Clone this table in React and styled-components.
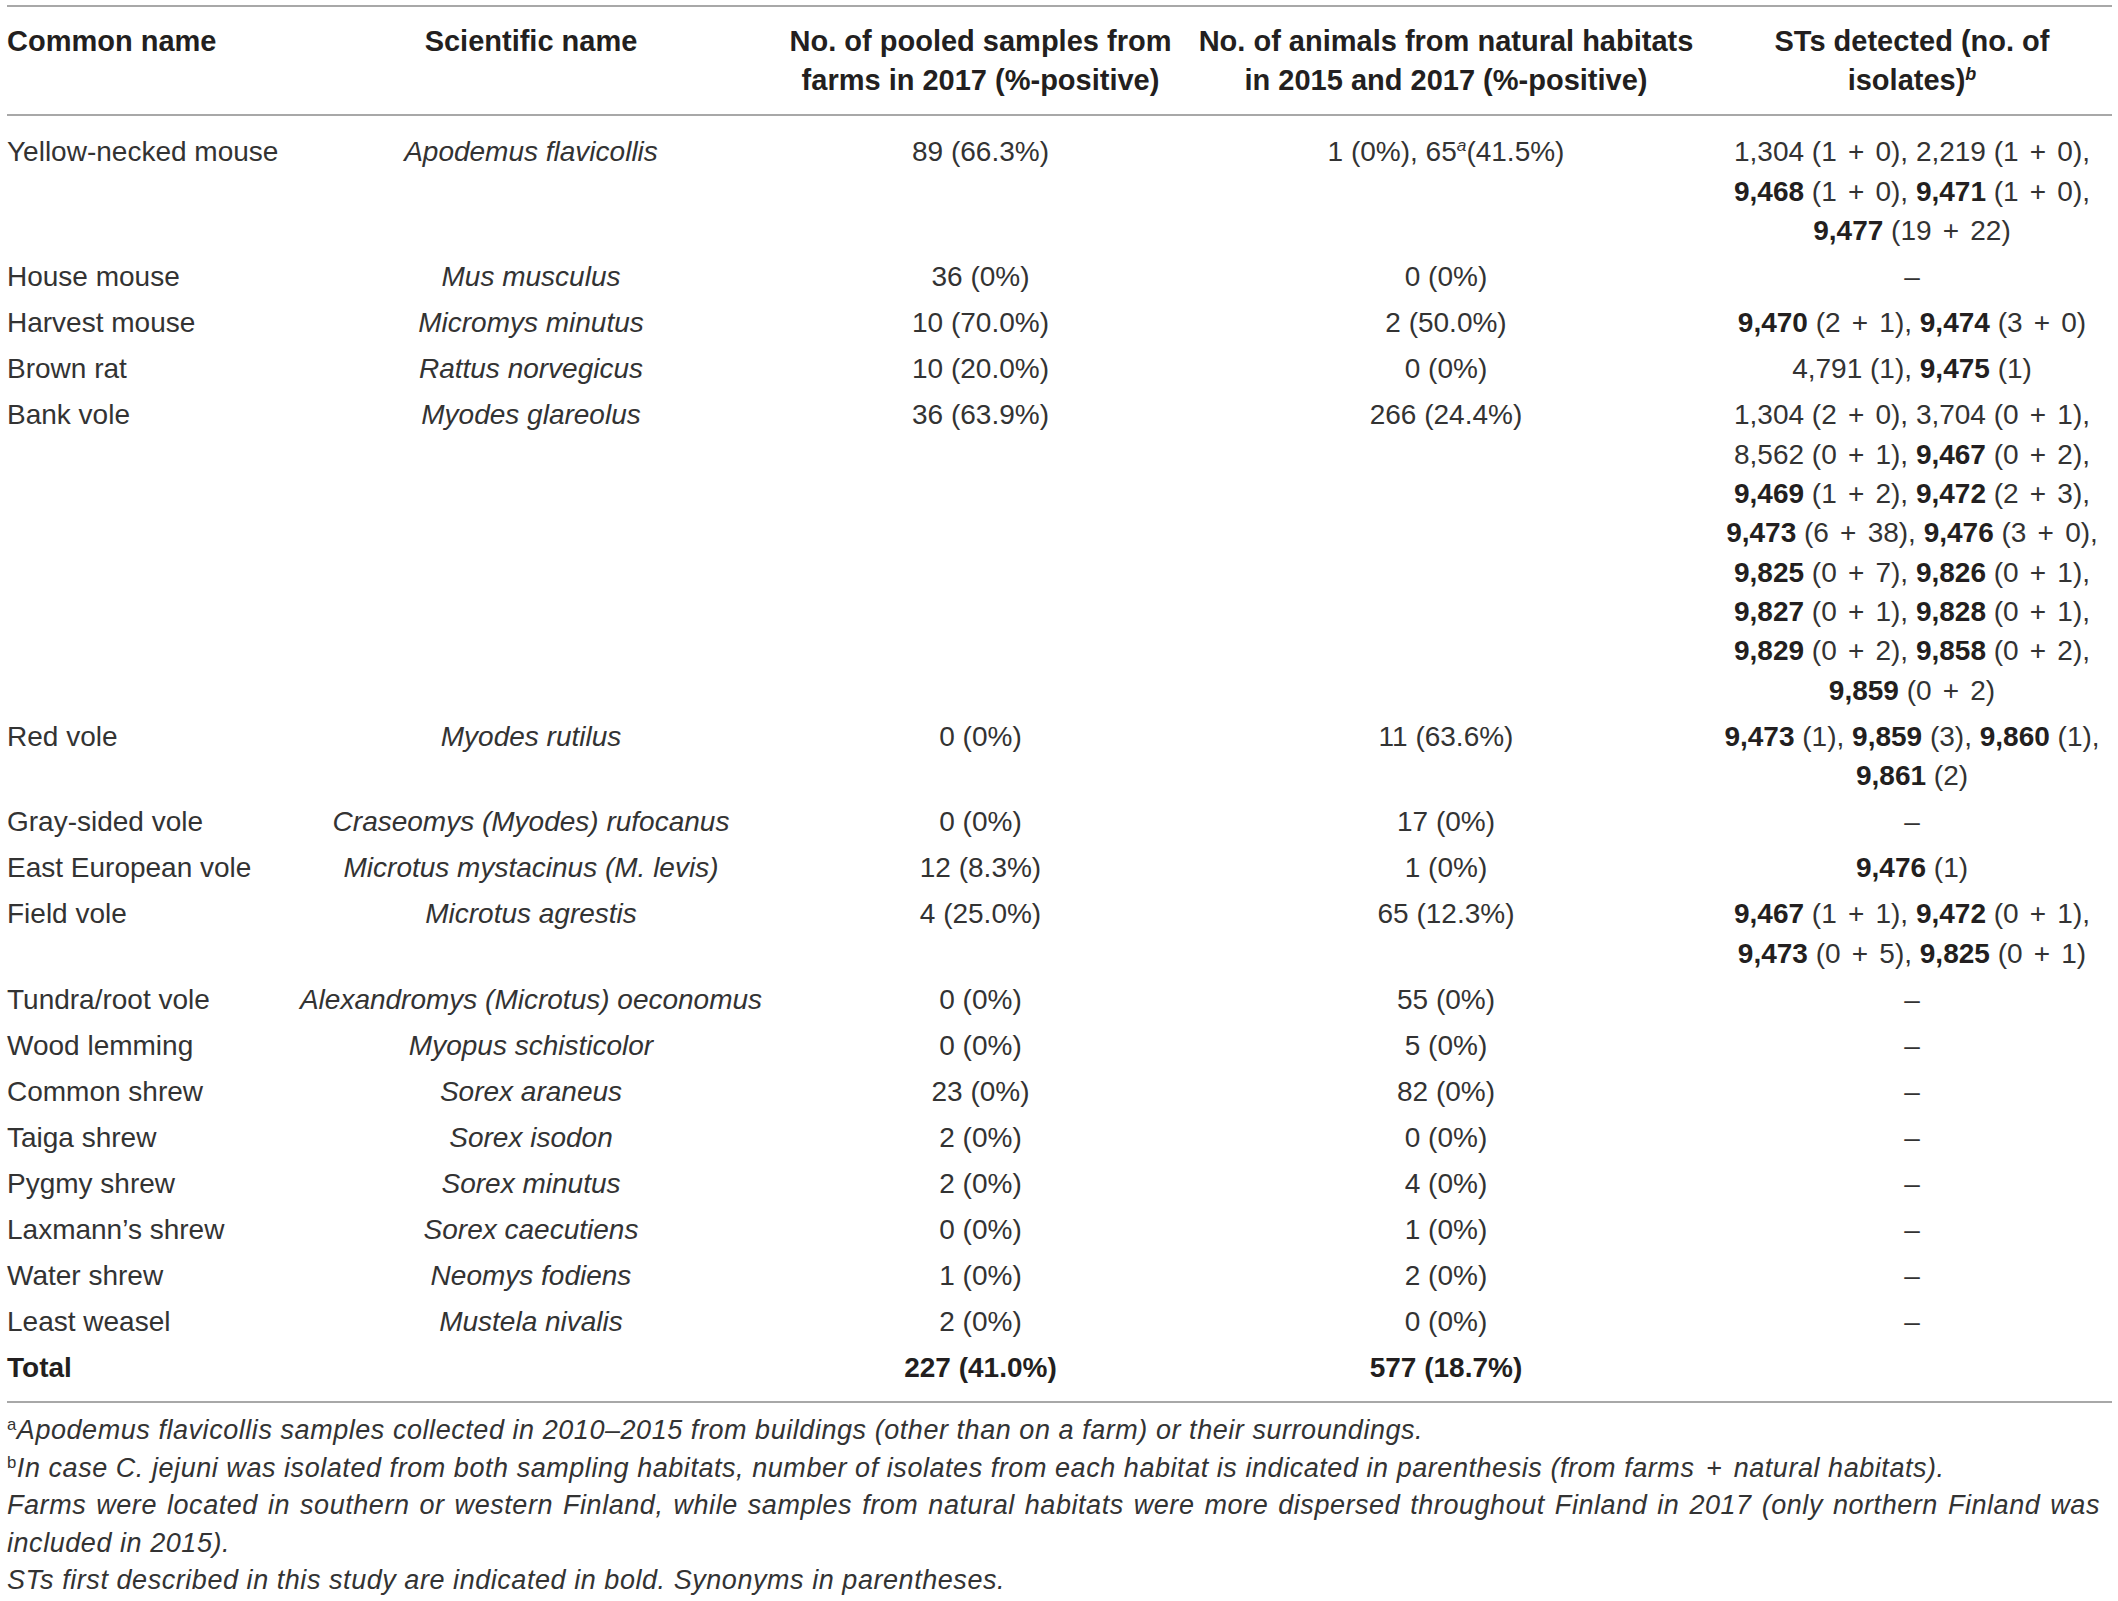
import React from 'react';
import styled, { createGlobalStyle } from 'styled-components';

const GlobalStyle = createGlobalStyle`
  html, body {
    margin: 0;
    padding: 0;
    background: #ffffff;
  }
  body {
    font-family: "Liberation Sans", Arial, Helvetica, sans-serif;
    color: #333333;
  }
`

const COLS = '274px 500px 399px 532px 400px';

const Page = styled.div`
  padding: 5px 0 0 7px;
  width: 2105px;
`

const Table = styled.div`
  border-top: 2px solid #a8a8a8;
`

const HeadRow = styled.div`
  display: grid;
  grid-template-columns: ${COLS};
  padding: 15px 0 13px;
  border-bottom: 2px solid #a8a8a8;
`

const HeadCell = styled.div`
  font-weight: bold;
  font-size: 29px;
  line-height: 39.4px;
  color: #231f20;
  white-space: nowrap;
  text-align: ${p => (p.$left ? 'left' : 'center')};
`

const Body = styled.div`
  padding: 13px 0 10px;
  border-bottom: 2px solid #a8a8a8;
`

const Row = styled.div`
  display: grid;
  grid-template-columns: ${COLS};
  padding: 3.35px 0;
`

const Cell = styled.div`
  font-size: 28px;
  line-height: 39.37px;
  white-space: nowrap;
  text-align: ${p => (p.$left ? 'left' : 'center')};
  font-style: ${p => (p.$italic ? 'italic' : 'normal')};
  font-weight: ${p => (p.$bold ? 'bold' : 'normal')};
  color: ${p => (p.$bold ? '#231f20' : '#333333')};
`

const StLine = styled.div`
  white-space: nowrap;
`

const Strong = styled.b`
  color: #231f20;
`

const Plus = styled.span`
  margin: 0 3.4px;
`

const Sup = styled.sup`
  font-size: 0.62em;
  font-style: ${p => (p.$italic ? 'italic' : 'normal')};
  line-height: 0;
  vertical-align: 0.55em;
`

const Notes = styled.div`
  padding-top: 9px;
  font-size: 27px;
  letter-spacing: 0.55px;
  line-height: 37.5px;
  font-style: italic;
  color: #333333;
`

const Note = styled.div`
  white-space: nowrap;
`

const Justified = styled.div`
  text-align: justify;
  text-align-last: justify;
  width: 2093px;
`

const rows = [
  ['Yellow-necked mouse', 'Apodemus flavicollis', '89 (66.3%)', 'A', [
    '1,304 (1 + 0), 2,219 (1 + 0),',
    '**9,468** (1 + 0), **9,471** (1 + 0),',
    '**9,477** (19 + 22)',
  ]],
  ['House mouse', 'Mus musculus', '36 (0%)', '0 (0%)', ['–']],
  ['Harvest mouse', 'Micromys minutus', '10 (70.0%)', '2 (50.0%)', ['**9,470** (2 + 1), **9,474** (3 + 0)']],
  ['Brown rat', 'Rattus norvegicus', '10 (20.0%)', '0 (0%)', ['4,791 (1), **9,475** (1)']],
  ['Bank vole', 'Myodes glareolus', '36 (63.9%)', '266 (24.4%)', [
    '1,304 (2 + 0), 3,704 (0 + 1),',
    '8,562 (0 + 1), **9,467** (0 + 2),',
    '**9,469** (1 + 2), **9,472** (2 + 3),',
    '**9,473** (6 + 38), **9,476** (3 + 0),',
    '**9,825** (0 + 7), **9,826** (0 + 1),',
    '**9,827** (0 + 1), **9,828** (0 + 1),',
    '**9,829** (0 + 2), **9,858** (0 + 2),',
    '**9,859** (0 + 2)',
  ]],
  ['Red vole', 'Myodes rutilus', '0 (0%)', '11 (63.6%)', [
    '**9,473** (1), **9,859** (3), **9,860** (1),',
    '**9,861** (2)',
  ]],
  ['Gray-sided vole', 'Craseomys (Myodes) rufocanus', '0 (0%)', '17 (0%)', ['–']],
  ['East European vole', 'Microtus mystacinus (M. levis)', '12 (8.3%)', '1 (0%)', ['**9,476** (1)']],
  ['Field vole', 'Microtus agrestis', '4 (25.0%)', '65 (12.3%)', [
    '**9,467** (1 + 1), **9,472** (0 + 1),',
    '**9,473** (0 + 5), **9,825** (0 + 1)',
  ]],
  ['Tundra/root vole', 'Alexandromys (Microtus) oeconomus', '0 (0%)', '55 (0%)', ['–']],
  ['Wood lemming', 'Myopus schisticolor', '0 (0%)', '5 (0%)', ['–']],
  ['Common shrew', 'Sorex araneus', '23 (0%)', '82 (0%)', ['–']],
  ['Taiga shrew', 'Sorex isodon', '2 (0%)', '0 (0%)', ['–']],
  ['Pygmy shrew', 'Sorex minutus', '2 (0%)', '4 (0%)', ['–']],
  ['Laxmann’s shrew', 'Sorex caecutiens', '0 (0%)', '1 (0%)', ['–']],
  ['Water shrew', 'Neomys fodiens', '1 (0%)', '2 (0%)', ['–']],
  ['Least weasel', 'Mustela nivalis', '2 (0%)', '0 (0%)', ['–']],
];

// plain text with " + " widened like the math plus of the original
function Plain({ text }) {
  const bits = text.split(' + ');
  return bits.map((b, i) => (
    <React.Fragment key={i}>
      {i > 0 && <>{' '}<Plus>+</Plus>{' '}</>}
      {b}
    </React.Fragment>
  ));
}

function StText({ line }) {
  const parts = line.split('**');
  return (
    <StLine>
      {parts.map((p, i) => (i % 2 ? <Strong key={i}>{p}</Strong> : <Plain key={i} text={p} />))}
    </StLine>
  );
}

function App() {
  return (
    <Page>
      <GlobalStyle />
      <Table>
        <HeadRow>
          <HeadCell $left>Common name</HeadCell>
          <HeadCell>Scientific name</HeadCell>
          <HeadCell>No. of pooled samples from<br />farms in 2017 (%-positive)</HeadCell>
          <HeadCell>No. of animals from natural habitats<br />in 2015 and 2017 (%-positive)</HeadCell>
          <HeadCell>STs detected (no. of<br />isolates)<Sup $italic>b</Sup></HeadCell>
        </HeadRow>
        <Body>
          {rows.map(([common, sci, farm, natural, sts]) => (
            <Row key={common}>
              <Cell $left>{common}</Cell>
              <Cell $italic>{sci}</Cell>
              <Cell>{farm}</Cell>
              <Cell>
                {natural === 'A' ? <>1 (0%), 65<Sup $italic>a</Sup>(41.5%)</> : natural}
              </Cell>
              <Cell>
                {sts.map((l, i) => <StText key={i} line={l} />)}
              </Cell>
            </Row>
          ))}
          <Row>
            <Cell $left $bold>Total</Cell>
            <Cell />
            <Cell $bold>227 (41.0%)</Cell>
            <Cell $bold>577 (18.7%)</Cell>
            <Cell />
          </Row>
        </Body>
      </Table>
      <Notes>
        <Note><Sup>a</Sup>Apodemus flavicollis samples collected in 2010–2015 from buildings (other than on a farm) or their surroundings.</Note>
        <Note><Sup>b</Sup>In case C. jejuni was isolated from both sampling habitats, number of isolates from each habitat is indicated in parenthesis (from farms <Plus>+</Plus> natural habitats).</Note>
        <Justified>Farms were located in southern or western Finland, while samples from natural habitats were more dispersed throughout Finland in 2017 (only northern Finland was</Justified>
        <Note>included in 2015).</Note>
        <Note>STs first described in this study are indicated in bold. Synonyms in parentheses.</Note>
      </Notes>
    </Page>
  );
}

export default App;
